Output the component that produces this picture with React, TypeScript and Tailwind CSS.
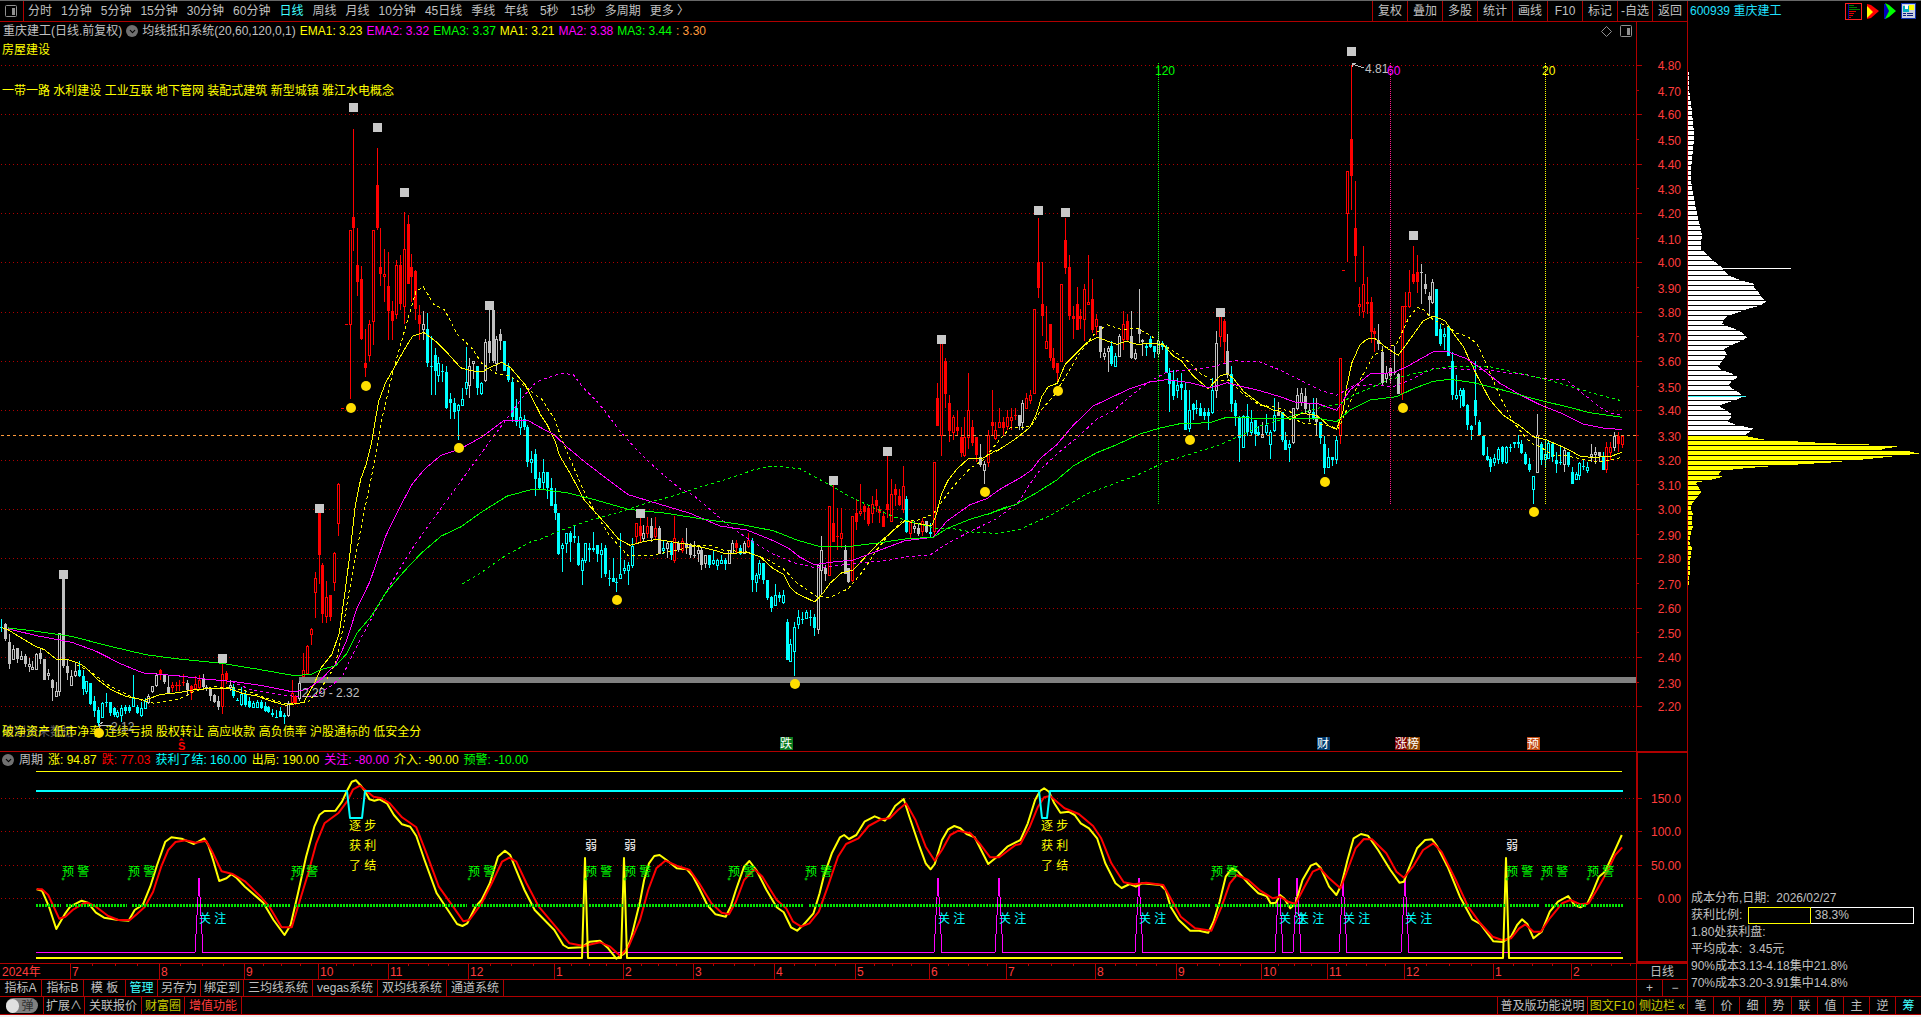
import { ChevronDown } from 'lucide-react';

type Frame = { ox: number; oy: number; kx: number; ky: number };

// every stretch of the history is stored in its own local units
const F1: Frame = { ox: 0, oy: 90, kx: 2.8, ky: 2.376 };
const F2: Frame = { ox: 540, oy: 300, kx: 3, ky: 3 };
const F3: Frame = { ox: 960, oy: 50, kx: 3, ky: 3 };
const F4: Frame = { ox: 1300, oy: 50, kx: 3, ky: 3 };
const S1: Frame = { ox: 0, oy: 680, kx: 2.45, ky: 3 };
const S2: Frame = { ox: 640, oy: 720, kx: 2.45, ky: 3 };
const S3: Frame = { ox: 1280, oy: 720, kx: 2.446, ky: 3 };

const path = (parts: [Frame, string][]) =>
  parts
    .flatMap(([f, pts]) =>
      pts.split(' ').map((p) => {
        const [x, y] = p.split(',').map(Number);
        return `${(f.ox + x / f.kx).toFixed(1)},${(f.oy + y / f.ky).toFixed(1)}`;
      }),
    )
    .join(' ');

// colour/type, x, high, body top, body bottom, low (upper case = filled body)
const BARS: [Frame, string][] = [
  [F1, `c 5 1257 1277 1278 1290|W 16 1268 1270 1306 1310|W 27 1293 1312 1366 1376|w 38 1321 1329 1352 1356|W 49 1328 1328 1352 1363|w 60 1333 1346 1352 1356|W 71 1342 1345 1365 1371|w 82 1350 1364 1370 1383|w 92 1357 1371 1377 1379|w 103 1340 1342 1376 1378|W 114 1328 1340 1354 1366|W 125 1352 1352 1402 1404|w 136 1376 1387 1391 1403|W 147 1400 1402 1421 1452|w 158 1408 1429 1440 1443|w 167 1292 1292 1430 1442|W 178 1161 1161 1370 1375|W 189 1356 1370 1386 1403|w 200 1379 1394 1416 1418|w 211 1360 1381 1392 1395|C 222 1357 1380 1393 1397|C 233 1380 1393 1424 1438|c 243 1405 1405 1430 1437|C 254 1409 1409 1460 1462|C 265 1440 1452 1476 1492|C 276 1468 1475 1506 1512|c 287 1456 1457 1490 1492|c 298 1434 1456 1458 1468|C 309 1456 1456 1482 1488|C 320 1466 1470 1487 1492|c 330 1474 1478 1488 1493|c 341 1463 1469 1485 1503|C 352 1462 1468 1476 1484|C 362 1462 1468 1476 1482|c 374 1391 1445 1465 1468|C 385 1462 1468 1482 1484|c 396 1456 1470 1487 1492|c 407 1446 1452 1470 1473|w 417 1436 1440 1456 1460|w 428 1417 1417 1430 1434|w 439 1386 1390 1416 1420|R 450 1376 1380 1388 1403|W 461 1388 1390 1408 1412|W 472 1392 1420 1434 1435|r 483 1408 1416 1420 1432|r 493 1408 1416 1418 1428|r 503 1404 1414 1416 1430|r 514 1388 1408 1410 1418|W 525 1403 1409 1426 1440|R 537 1414 1418 1434 1450|r 548 1394 1412 1422 1424|r 559 1392 1402 1420 1424|W 570 1388 1398 1420 1424|W 579 1416 1420 1424 1430|W 590 1419 1425 1440 1453|W 601 1436 1438 1456 1458|W 612 1440 1453 1468 1474|r 623 1360 1388 1464 1484|R 634 1382 1386 1404 1412|w 645 1402 1416 1420 1430|C 655 1412 1420 1440 1446|C 666 1446 1450 1452 1453|c 677 1419 1436 1460 1464|C 688 1430 1436 1462 1468|C 699 1444 1454 1468 1470|c 710 1452 1458 1468 1470|c 721 1450 1456 1468 1470|C 732 1450 1456 1470 1472|C 742 1456 1464 1476 1478|C 753 1464 1468 1480 1482|C 764 1472 1482 1486 1492|c 775 1474 1490 1492 1494|C 786 1468 1476 1490 1492|C 797 1482 1486 1492 1508|w 808 1454 1458 1486 1490|r 819 1404 1434 1456 1462|R 828 1438 1442 1458 1462|w 838 1406 1410 1446 1452|r 850 1340 1380 1394 1396|r 861 1320 1322 1386 1390|r 872 1280 1282 1294 1320|r 883 1147 1160 1194 1256|R 894 1006 1006 1106 1176|R 903 1125 1130 1246 1268|r 914 1168 1206 1252 1268|R 925 1200 1200 1253 1263|r 936 1100 1102 1170 1192|r 947 936 937 1030 1060|r 958 756 756 757 757|r 969 556 556 557 557|r 981 333 334 556 735|R 989 93 304 328 384|R 1001 328 416 458 490|R 1012 420 450 592 594|R 1023 568 650 662 684|r 1034 548 556 632 648|r 1046 334 334 550 607|R 1057 140 228 328 333|R 1066 328 422 438 467|r 1077 380 438 444 504|R 1088 386 468 526 595|R 1099 502 526 550 595|r 1110 404 416 534 545|R 1121 393 416 510 525|r 1132 292 380 514 556|R 1144 297 320 462 462|R 1152 392 422 446 504|R 1163 428 432 522 548|R 1174 512 536 556 595|w 1186 526 556 570 594|C 1197 532 570 650 659|C 1208 586 656 657 725|C 1219 614 632 670 725|c 1228 636 650 678 696|C 1239 652 668 672 695|C 1250 656 672 756 758|C 1261 720 736 746 784|C 1272 732 744 766 784|c 1284 748 750 762 832|c 1295 709 736 750 752|c 1306 613 696 710 725|w 1315 638 657 702 732|w 1326 644 645 650 688|C 1337 656 657 710 725|c 1348 696 698 720 725|w 1359 592 601 690 696|W 1370 525 597 626 650|W 1382 525 525 646 650|w 1390 585 592 650 668|W 1401 568 580 597 620|C 1412 597 597 670 670|C 1424 649 660 690 696|C 1435 683 696 778 789|C 1446 736 756 790 800|c 1457 709 778 802 820|C 1468 773 784 802 808|C 1478 796 802 885 896|c 1489 860 878 884 912|C 1500 853 866 926 965|C 1511 908 924 948 952|c 1522 878 908 932 952|C 1533 908 908 946 972|C 1544 924 948 990 990|C 1555 948 984 1006 1024`],
  [F2, `C 56 640 640 762 765|c 67 730 736 746 818|c 79 700 700 730 760|C 91 694 700 726 788|C 103 678 708 716 730|C 115 708 730 797 798|c 127 774 780 812 855|c 136 730 730 780 790|C 148 730 744 752 788|C 160 698 744 752 758|C 172 736 736 762 788|c 184 730 752 762 834|C 196 736 744 822 832|C 208 810 834 836 860|C 220 774 834 848 848|C 230 834 846 848 876|c 241 700 824 836 836|c 253 780 804 812 824|c 265 788 796 812 855|c 277 714 738 797 804|r 289 670 670 710 730|R 301 652 678 710 730|w 310 675 699 715 724|r 322 653 678 699 714|W 334 654 678 716 728|r 346 653 684 710 722|W 358 678 684 762 764|c 370 724 744 752 764|w 382 724 730 746 774|C 394 724 730 767 780|r 403 648 714 782 790|W 415 724 730 752 758|r 427 714 724 752 760|W 439 684 730 746 764|W 451 730 734 767 774|W 463 724 766 768 774|w 475 736 750 760 788|W 484 746 750 797 810|w 496 766 766 790 804|C 508 766 766 797 804|c 520 750 780 790 797|c 532 778 782 796 810|c 544 766 780 790 792|C 556 774 780 792 810|w 568 750 752 790 794|w 577 722 730 760 762|R 589 722 730 746 764|C 601 736 744 762 765|w 613 724 730 760 764|r 625 699 722 738 744|C 637 716 724 842 876|c 649 820 826 848 876|c 658 780 790 824 838|C 670 790 790 842 854|C 682 840 840 894 900|C 694 890 892 924 936|c 706 854 886 916 920|C 718 876 886 894 908|c 730 870 886 908 914|C 742 957 966 1080 1080|c 751 1017 1032 1084 1085|c 763 966 982 1054 1128|c 775 930 952 974 987|C 787 936 957 959 972|c 799 930 936 954 957|C 811 930 952 954 980|C 823 942 952 984 1010|w 835 796 796 988 1002|w 844 708 750 810 884|W 856 796 804 822 844|r 868 618 618 826 828|R 880 554 669 726 726|R 892 626 708 710 750|r 904 626 699 714 744|W 916 736 750 822 824|W 925 804 804 848 850|r 937 648 650 842 848|R 949 602 640 666 692|r 961 552 633 640 648|R 973 612 618 636 662|R 985 618 626 672 678|r 997 588 612 640 669|R 1009 567 602 620 636|R 1018 618 628 640 669|R 1030 634 648 682 682|R 1042 464 612 630 654|r 1054 537 582 664 666|R 1066 552 567 586 618|R 1078 567 588 615 618|r 1090 500 558 628 640|C 1099 588 598 696 700|r 1111 663 664 700 714|w 1123 663 678 686 700|W 1135 670 684 702 708|r 1147 654 664 694 708|W 1159 663 663 696 700|C 1171 670 698 702 714|r 1183 486 487 694 710|R 1192 249 294 378 378|r 1204 130 130 406 470|R 1216 174 183 282 324|R 1228 285 309 393 426|r 1240 345 352 398 420|R 1252 330 381 393 406|R 1264 381 411 459 471|r 1273 351 411 465 471|r 1285 219 330 411 447|R 1297 360 381 430 440|R 1309 411 411 465 486|W 1321 432 471 496 501|w 1333 483 492 510 552|r 1345 390 406 488 501|R 1357 270 366 378 406|r 1366 366 390 414 420|r 1378 324 366 382 384|R 1390 351 366 384 406|r 1402 330 351 378 390|r 1414 324 351 362 390|R 1426 324 345 347 360`],
  [F3, `W 178 1096 1096 1128 1140|w 187 1050 1060 1116 1140|r 199 1030 1044 1074 1076|r 211 1020 1035 1050 1064|r 223 778 778 1030 1034|R 235 504 636 714 746|R 247 636 762 800 858|r 259 768 874 894 896|R 271 822 822 926 934|R 280 894 924 956 962|R 292 940 940 970 1000|r 304 702 702 934 936|R 316 504 570 654 672|R 328 615 652 800 812|R 340 768 798 808 868|R 352 712 762 840 842|R 361 778 798 808 838|r 373 702 717 808 874|r 385 615 757 764 766|R 397 687 748 840 850|r 409 792 808 829 856|W 421 828 828 906 924|w 433 894 910 918 930|w 445 888 894 904 968|C 454 874 888 942 948|c 466 910 920 948 950|w 478 852 860 918 922|r 490 784 822 868 902|R 502 792 814 870 874|W 514 784 858 926 928|w 526 898 910 924 932|W 538 717 838 854 880|W 547 868 872 876 920|C 559 880 888 896 918|C 571 858 868 892 896|C 583 888 888 906 924|w 595 844 874 910 924|C 607 874 880 892 902|C 619 886 894 970 970|C 628 954 970 1002 1086|C 640 962 990 1038 1050|c 652 984 1006 1022 1044|C 664 970 1004 1016 1050|C 676 998 1020 1142 1142|c 688 1020 1080 1134 1146|C 700 1060 1062 1082 1110|C 709 1050 1074 1076 1094|C 721 1060 1074 1098 1100|C 733 1074 1086 1098 1110|C 745 1074 1086 1098 1140|c 757 984 1020 1088 1094|w 769 844 880 1022 1044|r 781 796 800 860 892|R 793 808 814 876 940|W 802 852 904 976 984|C 814 948 974 1062 1086|C 826 1050 1060 1098 1130|C 838 1100 1104 1164 1236|c 850 1096 1100 1192 1196|C 862 1064 1100 1148 1158|c 874 1080 1118 1148 1160|C 886 1110 1112 1152 1190|C 895 1130 1146 1156 1160|w 907 1116 1154 1162 1164|c 919 1094 1126 1146 1156|c 931 1140 1146 1184 1228|c 943 1044 1096 1142 1146|W 955 1058 1086 1098 1100|C 967 1086 1086 1172 1176|C 976 1146 1170 1200 1200|c 988 1170 1182 1192 1236|w 1000 1074 1076 1178 1182|w 1012 1014 1036 1076 1080|w 1024 1014 1030 1056 1068|W 1036 1016 1040 1078 1092|w 1048 1064 1080 1088 1116|C 1060 1044 1086 1104 1110|W 1069 1044 1102 1118 1156|C 1081 1116 1118 1164 1182|C 1093 1160 1182 1254 1272|c 1105 1194 1222 1252 1256|C 1117 1222 1222 1230 1250|c 1129 1160 1170 1228 1242|r 1141 924 925 1156 1182|r 1150 660 660 662 662|r 1162 364 364 490 636|R 1174 46 268 380 480|R 1186 393 534 618 696|r 1198 712 762 770 798|r 1210 590 702 784 806|R 1222 682 756 764 792|R 1234 742 756 846 880|R 1243 834 844 854 908|W 1255 822 872 882 900|W 1267 888 908 1000 1006|w 1279 948 970 984 1000|W 1291 954 954 978 1004|W 1303 888 968 970 976|W 1315 970 974 1032 1034|r 1327 768 768 1030 1050|R 1336 728 768 770 820|r 1348 660 726 770 776|R 1360 590 672 698 702|R 1372 615 668 698 730|W 1384 644 666 668 762|W 1396 672 702 718 732|W 1408 726 740 750 798|w 1417 687 696 758 764`],
  [F4, `C 409 717 717 860 860|C 421 822 838 882 888|c 433 836 852 860 902|C 445 828 828 920 920|C 457 908 934 1036 1050|c 469 975 1036 1046 1050|c 481 1014 1020 1036 1074|C 490 1014 1020 1068 1072|C 502 1064 1066 1126 1140|C 514 1126 1128 1142 1170|C 526 934 1050 1098 1126|C 538 1110 1116 1156 1160|C 550 1156 1160 1216 1220|C 562 1192 1220 1230 1234|C 571 1222 1228 1252 1266|c 583 1212 1226 1238 1250|c 595 1192 1198 1228 1242|C 607 1190 1192 1238 1242|c 619 1190 1192 1238 1242|C 631 1182 1191 1193 1206|C 643 1178 1178 1182 1194|C 655 1156 1176 1182 1196|C 664 1170 1182 1210 1214|C 676 1206 1212 1242 1246|C 688 1226 1242 1260 1266|c 700 1278 1278 1318 1362|w 712 1094 1156 1268 1270|C 724 1178 1182 1230 1246|c 736 1170 1214 1228 1252|c 745 1170 1180 1224 1228|C 757 1176 1182 1222 1236|C 769 1206 1230 1242 1270|c 781 1190 1236 1240 1246|w 793 1192 1200 1244 1266|C 805 1206 1206 1246 1252|C 817 1252 1266 1304 1304|c 829 1266 1272 1288 1292|c 838 1236 1240 1276 1292|C 850 1228 1250 1252 1262|c 862 1236 1252 1260 1270|w 874 1182 1214 1220 1236|w 886 1192 1206 1214 1242|W 898 1206 1206 1220 1236|C 910 1206 1222 1260 1260|r 919 1176 1192 1258 1270|r 931 1176 1192 1208 1230|w 943 1146 1158 1192 1204|R 955 1146 1158 1182 1206|r 967 1156 1158 1182 1196`],
];

const BAR_COLORS: Record<string, string> = { r: '#ff0000', c: '#00ffff', w: '#c0c0c0' };

const AVERAGES = [
  {
    color: '#ffff00', dash: false,
    points: path([
      [F1, '5,1277 22,1282 60,1302 100,1322 125,1330 160,1354 185,1352 220,1362 240,1372 275,1402 310,1424 350,1440 405,1450 450,1436 500,1432 550,1424 600,1422 640,1422 680,1434 720,1440 760,1452 800,1462 850,1455 880,1410 900,1372 930,1340 950,1290 965,1200 980,1100 995,985 1010,925 1025,890 1040,840 1060,740 1080,695 1100,665 1130,620 1155,585 1186,576 1220,597 1250,622 1290,660 1320,667 1350,670 1370,660 1405,647 1430,660 1470,700 1510,765'],
      [F2, '0,342 22,375 46,425 58,465 96,530 133,600 160,630 200,675 236,718 270,736 310,725 350,718 410,728 460,736 520,750 560,762 620,756 660,770 700,806 732,824 750,862 770,880 824,906 850,878 870,850 905,818 940,810 975,772 1010,735 1050,700 1095,662 1120,668 1175,678 1190,640 1205,580 1225,540 1250,508 1285,476 1330,474 1370,450'],
      [F3, '110,1204 170,1164 210,1132 230,1090 245,1040 265,1010 292,1000 315,944 350,908 380,878 411,862 470,883 500,874 530,883 580,880 610,884 640,918 664,932 700,978 745,1016 780,978 802,971 820,985 850,1024 900,1062 940,1080 960,1084 990,1108 1024,1090 1070,1096 1110,1130 1130,1138 1150,1080 1160,1010 1175,940 1200,884 1220,868 1243,864 1280,894 1315,916 1350,868 1390,812 1420,798'],
      [F4, '435,812 460,850 490,890 530,975 570,1050 610,1096 660,1128 700,1160 740,1170 800,1196 840,1218 870,1222 930,1220 967,1206'],
    ]),
  },
  {
    color: '#ffff00', dash: true,
    points: path([
      [F1, '215,1366 250,1380 300,1412 340,1430 380,1446 430,1457 500,1448 545,1428 600,1418 650,1420 700,1430 740,1444 800,1458 860,1456 900,1420 930,1380 945,1345 960,1280 980,1180 1000,1090 1020,1000 1040,920 1070,780 1100,670 1140,550 1165,478 1186,468 1215,510 1245,522 1280,580 1320,612 1350,650 1390,674 1430,680 1470,704 1505,728'],
      [F2, '6,298 45,360 66,420 96,490 130,570 170,645 210,708 265,768 340,765 400,752 470,738 510,736 550,750 620,756 680,778 732,808 770,848 830,890 870,892 925,866 970,812 1010,750 1050,700 1090,660 1130,662 1180,642 1205,605 1240,560 1290,505 1330,480 1370,430'],
      [F3, '150,1134 190,1132 215,1126 240,1084 280,1040 310,990 360,908 400,856 440,824 490,840 530,834 570,856 620,890 680,930 720,970 760,992 805,990 850,1032 900,1066 940,1070 990,1084 1020,1118 1100,1126 1135,1136 1160,1080 1200,990 1240,918 1280,892 1310,882 1345,806 1372,772 1390,778 1420,810'],
      [F4, '445,830 470,850 500,858 530,880 560,944 600,1040 640,1116 680,1166 700,1182 720,1190 760,1216 800,1218 860,1230 900,1236 967,1222'],
    ]),
  },
  {
    color: '#ff00ff', dash: false,
    points: path([
      [F1, '22,1280 100,1296 200,1312 270,1334 340,1364 400,1385 500,1392 580,1400 660,1406 740,1416 820,1430 860,1424 900,1400 940,1364 970,1310 1000,1230 1035,1170 1080,1060 1120,990 1155,935 1190,900 1235,868 1290,852 1350,824 1410,786 1480,786'],
      [F2, '0,382 40,402 80,440 130,482 200,536 265,584 350,610 450,640 540,678 620,690 700,722 745,744 780,772 824,794 880,786 940,780 1010,754 1095,722 1180,712 1220,664 1290,614 1340,596 1380,568'],
      [F3, '130,1312 180,1284 215,1260 240,1226 290,1184 340,1126 400,1068 450,1044 510,1016 570,996 620,989 690,998 750,1014 802,998 840,1008 900,1022 960,1040 1010,1058 1070,1060 1130,1081 1170,1020 1230,972 1300,968 1340,950 1420,905'],
      [F4, '440,904 500,926 550,960 600,1000 660,1034 720,1064 790,1092 850,1122 910,1134 967,1139'],
    ]),
  },
  {
    color: '#ff00ff', dash: true,
    points: path([
      [F1, '650,1406 700,1424 760,1434 820,1440 880,1440 930,1415 960,1390 1000,1320 1050,1240 1100,1165 1150,1095 1200,1034 1260,965 1320,895 1380,825 1420,780 1460,734 1500,695'],
      [F2, '10,238 40,228 65,220 100,224 130,264 170,304 200,340 240,394 300,460 360,516 420,566 460,586 510,628 560,672 620,714 700,762 760,788 830,804 950,790 1050,780 1100,770 1170,765 1210,738 1260,710 1320,680 1370,656 1440,602'],
      [F3, '200,1316 240,1260 300,1204 350,1164 410,1108 460,1082 500,1048 560,1000 620,966 700,958 760,950 820,932 900,936 960,960 1020,990 1080,1020 1130,1036 1180,1008 1230,1004 1300,1010 1350,990 1420,955'],
      [F4, '470,957 560,958 610,968 680,974 730,986 800,990 850,1032 900,1072 930,1090 967,1094'],
    ]),
  },
  {
    color: '#00ff00', dash: false,
    points: path([
      [F1, '22,1278 100,1286 200,1298 300,1320 410,1342 500,1352 620,1362 720,1376 820,1391 870,1389 900,1377 940,1368 970,1340 1000,1290 1040,1250 1080,1195 1130,1145 1180,1100 1235,1060 1290,1038 1350,1002 1420,965 1490,949'],
      [F2, '0,568 80,578 160,598 265,628 380,640 480,656 600,673 700,692 770,720 840,740 940,738 1020,728 1100,716 1180,712 1220,686 1290,658 1350,640 1400,620'],
      [F3, '80,1394 170,1362 230,1328 290,1290 340,1248 410,1208 470,1184 540,1152 600,1134 660,1121 750,1118 800,1102 900,1105 1000,1105 1080,1106 1130,1115 1170,1080 1230,1050 1310,1040 1360,1016 1420,994'],
      [F4, '450,988 520,998 600,1018 700,1046 800,1070 870,1088 967,1102'],
    ]),
  },
  {
    color: '#00ff00', dash: true,
    points: path([
      [F1, '1295,1174 1350,1145 1420,1104 1490,1072'],
      [F2, '0,718 60,692 140,664 240,636 330,606 400,588 470,564 560,538 640,510 700,498 780,506 830,534 880,560 930,590 990,618 1060,650 1110,664 1180,684 1240,686 1300,697 1370,700 1440,688'],
      [F3, '280,1392 380,1332 460,1302 530,1276 620,1234 700,1210 780,1184 860,1148 900,1128 960,1110 1020,1090 1100,1068 1140,1062 1180,1036 1230,1014 1290,988 1360,972 1430,956'],
      [F4, '450,948 560,948 640,966 720,984 800,1006 880,1030 967,1053'],
    ]),
  },
];

const CYCLE_FAST = path([
  [S1, '90,628 103,632 120,680 138,747 160,700 172,680 200,662 215,668 235,698 255,713 290,720 315,722 330,690 350,674 368,620 385,555 405,485 420,472 445,476 475,492 500,475 510,495 522,540 537,603 555,595 567,583 580,594 600,620 645,668 670,720 697,765 712,735 730,640 750,530 770,440 783,404 795,393 822,392 838,365 850,333 862,305 872,301 885,318 895,335 905,358 917,362 930,358 948,370 965,405 985,433 1005,440 1020,468 1040,540 1070,640 1100,695 1120,732 1133,738 1145,730 1165,680 1180,660 1200,610 1220,530 1237,512 1250,525 1262,562 1285,630 1310,690 1358,750 1380,795 1392,804 1425,802 1445,785 1470,782 1490,805 1510,836 1530,820 1545,780'],
  [S2, '0,545 10,480 22,430 35,408 48,405 65,420 90,445 115,448 130,470 145,505 165,555 185,583 210,590 222,560 235,510 255,440 268,423 285,450 310,510 335,562 352,577 370,622 385,632 400,615 425,580 440,520 450,470 470,400 490,352 500,345 512,357 530,345 550,305 575,289 600,302 612,285 625,258 646,237 660,290 685,380 700,430 712,448 722,432 740,360 755,328 770,318 785,325 800,342 820,352 838,395 853,432 875,410 900,380 932,360 950,310 968,240 980,213 990,205 1002,215 1015,250 1030,278 1050,275 1065,285 1080,310 1100,325 1120,355 1140,430 1165,490 1180,504 1200,492 1215,500 1230,490 1275,495 1288,510 1300,560 1320,600 1348,632 1370,632 1392,638 1405,605 1420,545 1435,470 1450,445 1465,455 1490,490 1515,520 1535,528 1545,550 1558,548'],
  [S3, '0,525 10,535 25,565 38,550 55,480 75,437 88,430 100,445 120,500 138,525 150,495 165,420 180,355 198,342 215,347 240,390 270,450 292,488 303,485 315,445 335,385 355,360 372,358 385,380 410,440 440,530 470,598 490,612 522,664 545,666 565,650 580,615 592,598 605,612 620,655 640,635 660,575 680,545 705,528 720,555 735,562 752,550 765,515 780,470 795,455 812,410 836,345'],
]);

const CYCLE_SLOW = path([
  [S1, '90,628 103,628 118,645 145,716 160,710 180,688 205,670 215,668 235,680 265,708 290,720 318,720 335,703 355,680 375,635 395,560 412,510 430,486 455,481 480,488 505,482 520,515 543,574 570,582 600,604 640,652 660,680 690,742 715,742 735,660 755,580 775,490 795,430 830,398 850,365 865,328 882,317 900,335 915,350 935,355 955,370 985,412 1020,442 1045,520 1075,620 1110,680 1135,724 1150,720 1180,670 1205,610 1230,545 1248,533 1265,545 1290,610 1320,680 1365,745 1395,790 1430,798 1470,787 1495,800 1520,828 1540,800'],
  [S2, '0,600 20,510 40,445 62,422 90,437 122,450 145,490 175,550 200,578 218,583 235,545 255,480 280,447 300,470 335,540 358,565 375,605 395,620 415,610 438,575 460,500 485,410 505,372 535,355 560,318 590,298 612,295 632,270 652,250 675,300 700,380 722,422 740,390 760,345 780,332 810,340 835,375 858,412 880,412 920,375 932,372 955,320 975,260 990,232 1005,228 1040,265 1075,282 1110,318 1130,355 1155,430 1185,487 1210,493 1240,488 1282,495 1300,535 1325,590 1360,625 1400,632 1425,560 1445,490 1462,465 1490,480 1520,512 1550,535'],
  [S3, '0,530 20,545 38,552 60,500 80,455 98,445 120,475 148,505 165,450 185,385 205,357 225,358 260,400 285,455 303,473 325,440 350,390 375,370 395,395 430,480 460,560 490,610 520,650 545,661 565,655 585,625 600,613 620,635 638,635 660,595 690,550 710,540 735,553 755,550 775,510 800,455 820,405 837,382'],
]);

const TOPS = [[353, 107], [377, 127], [404, 192], [489, 305], [319, 508], [63, 574], [222, 658], [640, 513], [833, 480], [887, 451], [941, 339], [1038, 210], [1065, 212], [1220, 312], [1351, 51], [1413, 235]];
const LOWS = [[351, 408], [366, 386], [459, 448], [99, 733], [617, 600], [795, 684], [985, 492], [1058, 391], [1190, 440], [1325, 482], [1403, 408], [1534, 512]];
const WARN = [62, 128, 291, 468, 585, 624, 728, 805, 1211, 1506, 1541, 1587];
const WATCH = [199, 938, 999, 1139, 1279, 1297, 1343, 1405];
const WEAK = [585, 624, 1506];
const EXITS = [[347, 350, 362, 365], [1039, 1042, 1047, 1050]];
const EVENTS: [string, number, string][] = [['跌', 786, '#0a7a1e'], ['财', 1323, '#003a70'], ['涨', 1401, '#7c0000'], ['榜', 1413, '#8a4000'], ['预', 1533, '#c24a10']];

const MONTHS: [number, string][] = [[70, '7'], [159, '8'], [244, '9'], [318, '10'], [388, '11'], [468, '12'], [554, '1'], [623, '2'], [693, '3'], [774, '4'], [855, '5'], [929, '6'], [1006, '7'], [1095, '8'], [1176, '9'], [1261, '10'], [1327, '11'], [1404, '12'], [1493, '1'], [1571, '2']];

// cost distribution outline: y, right edge
const COST: number[][] = '32,143 55,145 75,147 95,150 110,153 140,156 170,160 200,162 215,161 240,158 260,156 280,153 320,154 345,159 380,166 410,174 440,182 458,186 475,183 492,182 500,192 520,215 540,245 545,247 555,258 565,275 575,305 583,340 592,342 605,355 618,365 630,378 640,362 650,320 660,290 668,262 678,252 687,246 695,265 705,295 715,312 723,321 733,305 745,270 755,252 768,260 785,247 800,234 808,245 818,275 827,293 838,275 848,265 856,275 868,298 878,308 888,285 898,248 905,240 912,255 922,272 935,272 943,262 952,288 962,340 970,330 980,312 990,365 1000,560 1006,785 1012,752 1016,718 1020,800 1027,837 1033,775 1040,700 1050,580 1058,430 1065,320 1072,245 1080,235 1088,248 1095,215 1103,168 1112,172 1125,185 1138,175 1150,163 1165,152 1185,158 1200,155 1220,158 1240,151 1258,148 1275,156 1295,152 1320,150 1345,149 1355,145 1370,143'
  .split(' ')
  .map((p) => {
    const [y, x] = p.split(',').map(Number);
    return [60 + y / 2.613, (x - 144) / 3];
  });

const costAt = (y: number) => {
  const i = COST.findIndex((p) => p[0] > y);
  if (i < 1) return 1;
  const [a, b] = [COST[i - 1], COST[i]];
  return Math.max(1, Math.round(a[1] + ((b[1] - a[1]) * (y - a[0])) / (b[0] - a[0])));
};

const priceY = (p: number) => Math.round(65 + (4.8 - p) * 246.7);
const PRICES = Array.from({ length: 27 }, (_, i) => 4.8 - i * 0.1);
const CYCLE_LEVELS: [string, number][] = [['150.0', 798], ['100.0', 831], ['50.00', 865], ['0.00', 898]];

const PERIODS = ['分时', '1分钟', '5分钟', '15分钟', '30分钟', '60分钟', '日线', '周线', '月线', '10分钟', '45日线', '季线', '年线', '5秒', '15秒', '多周期', '更多 〉'];
const TOOLS = ['复权', '叠加', '多股', '统计', '画线', 'F10', '标记', '-自选', '返回'];
const TEMPLATES = ['指标A', '指标B', '模 板', '管理', '另存为', '绑定到', '三均线系统', 'vegas系统', '双均线系统', '通道系统'];
const SIDE_TABS = ['笔', '价', '细', '势', '联', '值', '主', '逆', '筹'];

const templateClass = (t: string) => {
  if (t === '管理') return 'min-w-8 border-r border-[#b00000] px-[3px] text-[#40ffff]';
  if (t.length < 4) return 'min-w-[42px] border-r border-[#b00000] px-[3px]';
  return 'border-r border-[#b00000] px-1';
};

function Bars() {
  return (
    <g shapeRendering="crispEdges">
      {BARS.flatMap(([f, data], n) =>
        data.split('|').map((row) => {
          const [kind, ...v] = row.split(' ');
          const x = Math.floor(f.ox + Number(v[0]) / f.kx);
          const [h, t, b, l] = v.slice(1).map((s) => Math.floor(f.oy + Number(s) / f.ky));
          const fill = BAR_COLORS[kind.toLowerCase()];
          const hollow = kind === kind.toLowerCase() && b - t > 1;
          return (
            <g key={`${n}-${v[0]}`} fill={fill}>
              {t > h && <rect x={x} y={h} width={1} height={t - h} />}
              {l > b && <rect x={x} y={b} width={1} height={l - b} />}
              {hollow ? (
                <rect x={x - 0.5} y={t + 0.5} width={2} height={b - t} fill="#000" stroke={fill} />
              ) : (
                <rect x={x - 1} y={t} width={3} height={Math.max(1, b - t)} />
              )}
            </g>
          );
        }),
      )}
    </g>
  );
}

function PriceChart() {
  return (
    <svg viewBox="0 22 1636 729" preserveAspectRatio="none" className="relative block h-full w-full text-xs">
      {PRICES.filter((_, i) => i % 2 === 0).map((p) => (
        <line key={p} x1={1} x2={1636} y1={priceY(p) + 0.5} y2={priceY(p) + 0.5} stroke="#b00000" strokeDasharray="1 3" shapeRendering="crispEdges" />
      ))}
      <rect x={299} y={677} width={1337} height={6} fill="#808080" />
      <Bars />
      <g fill="none" shapeRendering="crispEdges">
        {AVERAGES.map((a, i) => (
          <polyline key={i} points={a.points} stroke={a.color} strokeDasharray={a.dash ? '3 3' : undefined} />
        ))}
        <line x1={1} x2={1636} y1={435.5} y2={435.5} stroke="#ff9a3c" strokeDasharray="3 3" />
        <line x1={1158.5} x2={1158.5} y1={63} y2={505} stroke="#00ff00" strokeDasharray="1 1" />
        <line x1={1390.5} x2={1390.5} y1={63} y2={505} stroke="#ff1a8c" strokeDasharray="1 1" />
        <line x1={1545.5} x2={1545.5} y1={63} y2={505} stroke="#ffff00" strokeDasharray="1 1" />
        <path d="M1364 68l-12-4m4-1h-4v4" stroke="#c0c0c0" />
        <path d="M111 725h-12m4-3l-4 3v3" stroke="#c0c0c0" />
      </g>
      <g shapeRendering="crispEdges" fill="#c8c8c8">
        {TOPS.map(([x, y]) => <rect key={x} x={x - 4} y={y - 4} width={9} height={9} />)}
      </g>
      {LOWS.map(([x, y]) => <circle key={x} cx={x} cy={y} r={5} fill="#ffdd00" />)}
      <text x={1155} y={75} fill="#00ff00">120</text>
      <text x={1387} y={75} fill="#ff00ff">60</text>
      <text x={1542} y={75} fill="#ffff00">20</text>
      <text x={1365} y={73} fill="#c0c0c0">4.81</text>
      <text x={302} y={697} fill="#c0c0c0">2.29 - 2.32</text>
      <text x={111} y={731} fill="#a0a0a0">2.12</text>
      <path d="M181.500 738l-2.500 2.500h5z" fill="#ff0000" />
      <text x={178} y={750} fill="#ff0000" className="text-[11px] font-bold">S</text>
      {EVENTS.map(([label, x, bg]) => (
        <g key={label}>
          <rect x={x - 6} y={737} width={13} height={13} fill={bg} />
          <text x={x - 6} y={748} fill="#fff">{label}</text>
        </g>
      ))}
    </svg>
  );
}

function CycleChart() {
  const spike = (x: number, half: number, top: number, base: number) =>
    `L${x - half} ${base}L${x} ${top}L${x + half} ${base}`;
  return (
    <svg viewBox="0 752 1636 211" preserveAspectRatio="none" className="block h-full w-full text-xs">
      <g shapeRendering="crispEdges" fill="none">
        {CYCLE_LEVELS.map(([l, y]) => (
          <line key={l} x1={1} x2={1636} y1={y + 0.5} y2={y + 0.5} stroke="#b00000" strokeDasharray="1 3" />
        ))}
        <path d="M36 771.500H1622" stroke="#ffff00" />
        <path d={`M36 952.500${WATCH.map((x) => spike(x, 4, 878, 952.5)).join('')}L1621 952.500`} stroke="#ff00ff" />
      </g>
      <g fill="none" strokeWidth={2} strokeLinejoin="round">
        <polyline points={CYCLE_FAST} stroke="#ffff00" />
        <polyline points={CYCLE_SLOW} stroke="#ff0000" />
        <path
          d={`M36 791${EXITS.map(([a, b, c, d]) => `H${a}L${b} 818H${c}L${d} 791`).join('')}H1623`}
          stroke="#00ffff"
        />
        <path d={`M36 958${WEAK.map((x) => spike(x, 3, 858, 958)).join('')}H1623`} stroke="#ffff00" />
      </g>
      <path
        d={`M36 905.500${WARN.map((x) => `H${x - 1}m5 0`).join('')}H1623`}
        fill="none" stroke="#00e600" strokeWidth={3} strokeDasharray="2 1" shapeRendering="crispEdges"
      />
      {WARN.map((x) => (
        <g key={x}>
          <circle cx={x + 1} cy={879} r={1} fill="none" stroke="#00e600" />
          <text x={x} y={876} fill="#00ff00">预 警</text>
        </g>
      ))}
      {WATCH.map((x) => <text key={x} x={x} y={923} fill="#00ffff">关 注</text>)}
      {WEAK.map((x) => <text key={x} x={x} y={850} fill="#fff">弱</text>)}
      {[349, 1041].map((x) => (
        <g key={x} fill="#ffff00">
          <text x={x} y={830}>逐 步</text>
          <text x={x} y={850}>获 利</text>
          <text x={x} y={870}>了 结</text>
        </g>
      ))}
    </svg>
  );
}

function TimeAxis() {
  return (
    <svg viewBox="0 964 1636 15" preserveAspectRatio="none" className="block h-full w-full text-xs" fill="#ff3c3c">
      <text x={2} y={976}>2024年</text>
      {MONTHS.map(([x, label], i) => {
        const next = MONTHS[i + 1]?.[0] ?? 1650;
        return (
          <g key={x}>
            <rect x={x} y={964} width={1} height={15} fill="#b00000" />
            {[0.25, 0.5, 0.75].map((k) => (
              <rect key={k} x={Math.round(x + (next - x) * k)} y={964} width={1} height={2} fill="#b00000" />
            ))}
            <text x={x + 2} y={976}>{label}</text>
          </g>
        );
      })}
    </svg>
  );
}

function CostChart() {
  const rows = Array.from({ length: 513 }, (_, i) => 72 + i).filter((y) => (y - 75) % 5 !== 0);
  return (
    <svg viewBox="0 21 233 869" preserveAspectRatio="none" className="block h-full w-full" shapeRendering="crispEdges">
      {rows.map((y) => (
        <rect key={y} x={0} y={y} width={costAt(y)} height={1} fill={y < 436 ? '#fff' : '#ffff00'} />
      ))}
      <rect x={0} y={268} width={103} height={1} fill="#fff" />
      <rect x={0} y={396} width={58} height={1} fill="#40ffff" />
    </svg>
  );
}

function PanelIcon() {
  return (
    <svg width="13" height="13" viewBox="0 0 13 13">
      <rect x="0.500" y="0.500" width="11" height="11" rx="1" fill="none" stroke="#909090" />
      <rect x="7" y="3" width="3" height="7" fill="#909090" />
    </svg>
  );
}

function CollapseButton({ label }: { label: string }) {
  return (
    <button aria-label={label} className="flex size-3 shrink-0 items-center justify-center rounded-full bg-[#707070] text-black">
      <ChevronDown size={9} strokeWidth={3} />
    </button>
  );
}

function SideIcons() {
  return (
    <div className="flex items-center gap-[5px] pr-[5px]">
      <button aria-label="筹码分布">
        <svg width="17" height="17" viewBox="0 0 17 17" className="block" shapeRendering="crispEdges">
          <rect x="0.500" y="0.500" width="16" height="16" fill="none" stroke="#ff2020" />
          <path d="M3.500 1v15" stroke="#0000a0" />
          <path d="M4 2.500h5M4 4.500h8M4 6.500h11" stroke="#008000" />
          <path d="M4 8.500h7M4 10.500h5M4 12.500h4M4 14.500h2" stroke="#e00000" />
        </svg>
      </button>
      <button aria-label="播放">
        <svg width="12" height="17" viewBox="0 0 12 17" className="block">
          <path d="M0 1l4 1 8 6-8 7-4 1z" fill="#ff0000" />
          <path d="M0 3l6 6-6 6z" fill="#ffff00" />
        </svg>
      </button>
      <button aria-label="下一个">
        <svg width="12" height="17" viewBox="0 0 12 17" className="block">
          <path d="M0 1h2l3 7-3 8H0z" fill="#0000c0" />
          <path d="M1 0l4 2 7 6-7 6-4 2 4-8z" fill="#00ff00" />
        </svg>
      </button>
      <button aria-label="资料">
        <svg width="15" height="16" viewBox="0 0 15 16" className="block" shapeRendering="crispEdges">
          <rect width="15" height="16" fill="#1030b0" />
          <rect x="1" y="1" width="13" height="14" fill="#c8d0e0" />
          <rect x="2" y="3" width="6" height="6" fill="#00b0c0" />
          <rect x="4" y="2" width="3" height="4" fill="#ffffff" />
          <rect x="8" y="2" width="5" height="5" fill="#ffff00" />
          <path d="M2 10.500h3M6 10.500h6M2 12.500h3M6 12.500h6" stroke="#102080" />
        </svg>
      </button>
    </div>
  );
}

export default function App() {
  return (
    <div className="flex h-screen flex-col overflow-hidden bg-black font-['Liberation_Sans','Noto_Sans_CJK_SC',sans-serif] text-xs leading-4 text-[#c0c0c0]">
      <div className="h-px shrink-0 bg-[#686868]" />
      <div className="flex min-h-0 flex-1">
        <main className="flex min-w-0 flex-1 flex-col">
          <nav className="flex h-[21px] shrink-0 items-stretch justify-between border-b border-[#b00000]">
            <div className="flex items-center gap-1 whitespace-nowrap">
              <button aria-label="侧栏" className="flex h-full w-6 items-center justify-center border-r border-[#b00000]">
                <PanelIcon />
              </button>
              <div className="flex items-center gap-[9px]">
                {PERIODS.map((p) => (
                  <button key={p} className={p === '日线' ? 'min-w-6 text-[#40ffff]' : 'min-w-6'}>{p}</button>
                ))}
              </div>
            </div>
            <div className="flex">
              {TOOLS.map((t) => (
                <button key={t} className="w-[35px] border-l border-[#b00000] whitespace-nowrap">{t}</button>
              ))}
            </div>
          </nav>

          <section className="flex min-h-0 flex-1">
            <div className="relative min-w-0 flex-1">
              <div className="absolute bottom-[11px] left-[2px] text-[#606060]">用到未来数据</div>
              <div className="absolute bottom-[11px] left-[2px] whitespace-nowrap text-[#ffff00]">
                破净资产 低市净率 连续亏损 股权转让 高应收款 高负债率 沪股通标的 低安全分
              </div>
              <PriceChart />
              <div className="absolute inset-x-0 top-0 flex items-center justify-between pt-[1px] pr-[3px] pl-[3px] whitespace-nowrap">
                <div className="flex items-center gap-1">
                  <span>重庆建工(日线.前复权)</span>
                  <CollapseButton label="主图指标" />
                  <span>均线抵扣系统(20,60,120,0,1)</span>
                  <span className="text-[#ffff00]">EMA1: 3.23</span>
                  <span className="text-[#ff00ff]">EMA2: 3.32</span>
                  <span className="text-[#00ff00]">EMA3: 3.37</span>
                  <span className="text-[#ffff00]">MA1: 3.21</span>
                  <span className="text-[#ff00ff]">MA2: 3.38</span>
                  <span className="text-[#00ff00]">MA3: 3.44</span>
                  <span className="text-[#ff9a3c]">: 3.30</span>
                </div>
                <div className="flex items-center gap-2">
                  <svg width="11" height="11" viewBox="0 0 11 11">
                    <path d="M5.500 0.500l5 5-5 5-5-5z" fill="none" stroke="#909090" />
                  </svg>
                  <PanelIcon />
                </div>
              </div>
              <div className="absolute top-5 left-[2px] text-[#ffff00]">房屋建设</div>
              <div className="absolute top-[61px] left-[2px] whitespace-nowrap text-[#ffff00]">
                一带一路 水利建设 工业互联 地下管网 装配式建筑 新型城镇 雅江水电概念
              </div>
            </div>
            <div className="w-[51px] shrink-0 border-l border-[#b00000]">
              <svg viewBox="0 22 50 729" preserveAspectRatio="none" className="block h-full w-full text-xs">
                {PRICES.map((p, i) => (
                  <g key={i}>
                    <rect x={0} y={priceY(p)} width={i % 2 ? 2 : 5} height={1} fill="#b00000" />
                    <text x={44} y={priceY(p) + (i % 2 ? 6 : 5)} textAnchor="end" fill="#ff3c3c">{p.toFixed(2)}</text>
                  </g>
                ))}
              </svg>
            </div>
          </section>

          <section className="flex h-[212px] shrink-0">
            <div className="relative min-w-0 flex-1 border-t border-[#b00000]">
              <CycleChart />
              <div className="absolute top-0 left-[2px] flex items-center gap-[5px] whitespace-nowrap">
                <CollapseButton label="副图指标" />
                <span>周期</span>
                <span className="text-[#ffff00]">涨: 94.87</span>
                <span className="text-[#ff0000]">跌: 77.03</span>
                <span className="text-[#00ffff]">获利了结: 160.00</span>
                <span className="text-[#ffff00]">出局: 190.00</span>
                <span className="text-[#ff00ff]">关注: -80.00</span>
                <span className="text-[#ffff00]">介入: -90.00</span>
                <span className="text-[#00ff00]">预警: -10.00</span>
              </div>
            </div>
            <div className="w-[51px] shrink-0 border-2 border-r-0 border-[#b00000]">
              <svg viewBox="0 753 49 208" preserveAspectRatio="none" className="block h-full w-full text-xs">
                {CYCLE_LEVELS.map(([l, y]) => (
                  <g key={l}>
                    <rect x={0} y={y} width={4} height={1} fill="#b00000" />
                    <text x={43} y={y + 5} textAnchor="end" fill="#ff3c3c">{l}</text>
                  </g>
                ))}
              </svg>
            </div>
          </section>

          <div className="flex h-4 shrink-0 border-t border-[#b00000]">
            <div className="min-w-0 flex-1"><TimeAxis /></div>
            <div className="w-[51px] shrink-0 border-l border-[#b00000] text-center">日线</div>
          </div>

          <div className="flex h-[17px] shrink-0 border-t border-[#b00000] whitespace-nowrap">
            {TEMPLATES.map((t) => <button key={t} className={templateClass(t)}>{t}</button>)}
            <div className="flex-1" />
            <button aria-label="放大" className="w-[26px] border-l border-[#b00000]">+</button>
            <button aria-label="缩小" className="w-[25px] border-l border-[#b00000]">−</button>
          </div>

          <footer className="flex h-[18px] shrink-0 border-t border-[#b00000] whitespace-nowrap">
            <label className="flex w-11 items-center justify-center border-r border-[#b00000]">
              <input type="checkbox" aria-label="弹" className="sr-only" />
              <span className="flex h-[15px] w-8 items-center rounded-full bg-[#808080] pr-1 text-[#303030]">
                <span className="size-[14px] rounded-full bg-[#e0e0e0]" />
                <span className="ml-[2px]">弹</span>
              </span>
            </label>
            <button className="w-[41px] border-r border-[#b00000]">扩展∧</button>
            <button className="border-r border-[#b00000] px-1">关联报价</button>
            <button className="border-r border-[#b00000] px-[3px] text-[#c8c800]">财富圈</button>
            <button className="border-r border-[#b00000] px-1 text-[#ff3c3c]">增值功能</button>
            <div className="flex-1" />
            <button className="w-[90px] border-l border-[#b00000]">普及版功能说明</button>
            <button className="w-[49px] border-l border-[#b00000] text-[#c8c800]">图文F10</button>
            <button className="w-[51px] border-l border-[#b00000] text-[#c8c800]">侧边栏 «</button>
          </footer>
        </main>

        <aside className="flex w-[234px] shrink-0 flex-col border-l border-[#b00000]">
          <header className="flex h-5 shrink-0 items-center justify-between pl-[2px]">
            <h1 className="whitespace-nowrap text-[#20e0ff]">600939 重庆建工</h1>
            <SideIcons />
          </header>
          <div className="min-h-0 flex-1">
            <CostChart />
          </div>
          <div className="shrink-0 pb-1 pl-[3px] leading-[17px] whitespace-nowrap">
            <p>成本分布,日期: &nbsp;2026/02/27</p>
            <div className="flex h-[17px] pr-[7px]">
              <span className="w-[57px]">获利比例:</span>
              <div className="flex flex-1 border border-white leading-[15px]">
                <span className="-m-px w-[38.3%] border border-[#ffff00]" />
                <span className="pl-[5px]">38.3%</span>
              </div>
            </div>
            <p>1.80处获利盘:</p>
            <p>平均成本: &nbsp;3.45元</p>
            <p>90%成本3.13-4.18集中21.8%</p>
            <p>70%成本3.20-3.91集中14.8%</p>
          </div>
          <div className="flex h-[18px] shrink-0 border-t border-[#b00000]">
            {SIDE_TABS.map((t) => (
              <button
                key={t}
                className={
                  t === '筹'
                    ? 'flex-1 text-[#40ffff]'
                    : 'flex-1 border-r border-[#b00000]'
                }
              >
                {t}
              </button>
            ))}
          </div>
        </aside>
      </div>
      <div className="h-[3px] shrink-0 border-t border-[#b00000] bg-[#f0f0f0]" />
    </div>
  );
}
